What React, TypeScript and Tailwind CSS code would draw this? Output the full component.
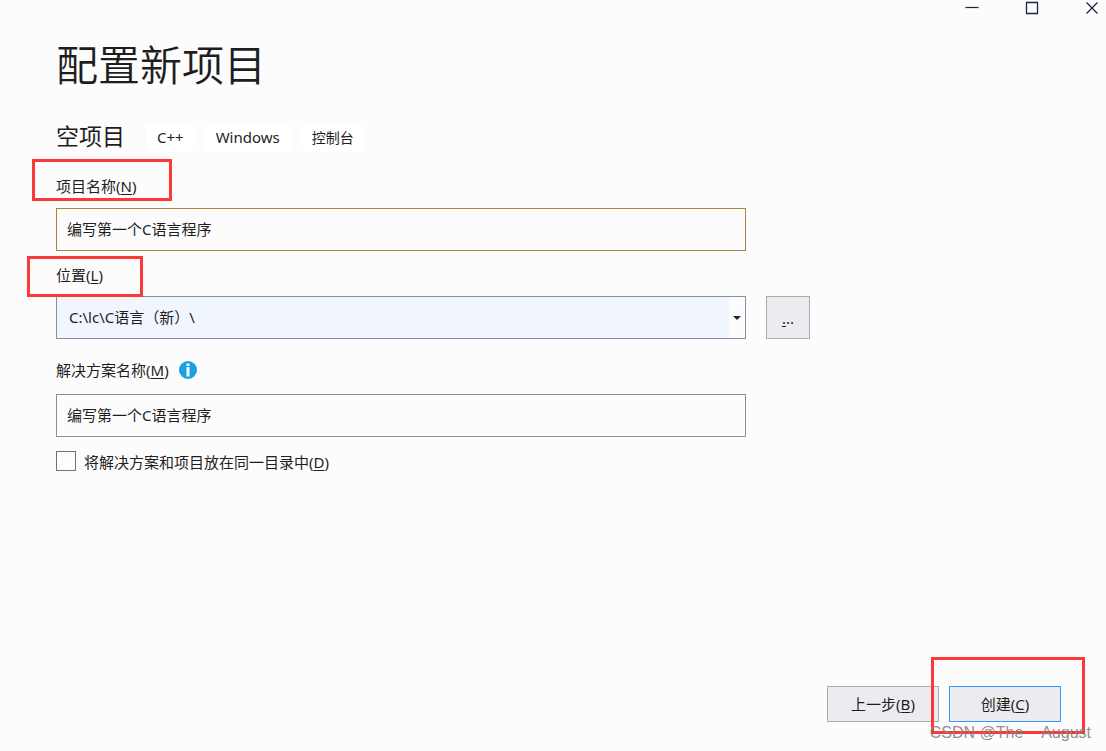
import type { ReactNode } from "react";

function Key({ children }: { children: ReactNode }) {
  return <span className="underline underline-offset-2">{children}</span>;
}

function Highlight({ className }: { className: string }) {
  return (
    <div
      aria-hidden="true"
      className={`pointer-events-none absolute z-10 border-[3px] border-[#fc3838] ${className}`}
    />
  );
}

function Tag({ children }: { children: ReactNode }) {
  return <li className="rounded-md bg-white px-[11px] pt-px leading-[27px]">{children}</li>;
}

function WindowControls() {
  return (
    <div className="flex h-4 justify-end gap-[46px] pr-[7px] text-[#17233f]">
      <button type="button" aria-label="最小化" className="h-4 w-[14px]">
        <svg width="14" height="16" viewBox="0 0 14 16" fill="none" stroke="currentColor">
          <path d="M.5 7.500h13" strokeWidth="1.2" />
        </svg>
      </button>
      <button type="button" aria-label="最大化" className="h-4 w-[14px]">
        <svg width="14" height="16" viewBox="0 0 14 16" fill="none" stroke="currentColor">
          <path d="M1.5 2.5h11v11h-11z" strokeWidth="1.3" />
        </svg>
      </button>
      <button type="button" aria-label="关闭" className="h-4 w-[14px]">
        <svg width="14" height="16" viewBox="0 0 14 16" fill="none" stroke="currentColor">
          <path d="M1.5 2.5l11 11M12.5 2.5l-11 11" strokeWidth="1.2" />
        </svg>
      </button>
    </div>
  );
}

export default function App() {
  return (
    <div className="flex min-h-screen flex-col bg-[#fcfcfc] font-['Noto_Sans','Noto_Sans_CJK_SC',sans-serif] text-[15px] leading-[22px] text-[#1e1e1e]">
      <WindowControls />
      <main className="flex flex-1 flex-col pr-[45px] pl-14">
        <h1 className="mt-[19px] text-[42px] leading-[60px] font-[350]">配置新项目</h1>
        <div className="mt-[25px] flex items-center gap-[21px]">
          <h2 className="text-[23px] leading-8">空项目</h2>
          <ul className="flex gap-[10px] pt-px">
            <Tag>C++</Tag>
            <Tag>Windows</Tag>
            <Tag>
              <span className="text-[14px]">控制台</span>
            </Tag>
          </ul>
        </div>

        <form className="mt-[23px] flex flex-1 flex-col" onSubmit={(e) => e.preventDefault()}>
          <div className="relative self-start">
            <label htmlFor="project">
              项目名称(<Key>N</Key>)
            </label>
            <Highlight className="-top-4 -left-6 h-[42px] w-[140px]" />
          </div>
          <input
            id="project"
            defaultValue="编写第一个C语言程序"
            className="mt-[11px] h-[43px] w-full max-w-[690px] border border-[#a8843c] bg-[#fcfcfc] px-[10px] pb-[2px] outline-none"
          />

          <div className="relative mt-[13px] self-start">
            <label htmlFor="location">
              位置(<Key>L</Key>)
            </label>
            <Highlight className="-top-2 -left-[29px] h-[41px] w-[116px]" />
          </div>
          <div className="mt-[10px] flex gap-5">
            <div className="relative w-full max-w-[690px]">
              <select
                id="location"
                className="block h-[43px] w-full appearance-none border border-[#8390a6] bg-[#f1f5fe] px-3 pb-[2px] outline-none"
              >
                <option>C:\lc\C语言（新）\</option>
              </select>
              <span className="pointer-events-none absolute inset-y-px right-px flex w-4 items-center justify-center bg-[#fcfcfc]">
                <svg width="8" height="4" viewBox="0 0 8 4" fill="#17233f">
                  <path d="M0 0h8L4 4z" />
                </svg>
              </span>
            </div>
            <button
              type="button"
              aria-label="浏览"
              className="h-[43px] w-11 shrink-0 border border-[#acacac] bg-[#ececf0]"
            >
              <Key>.</Key>..
            </button>
          </div>

          <div className="mt-5 flex items-center gap-[10px]">
            <label htmlFor="solution">
              解决方案名称(<Key>M</Key>)
            </label>
            <svg width="18" height="18" viewBox="0 0 18 18" role="img" aria-label="信息">
              <circle cx="9" cy="9" r="9" fill="#1ba1e2" />
              <path d="M7.5 2.500h3v2.500h-3zM7.500 6h3v9.500h-3z" fill="#fff" />
            </svg>
          </div>
          <input
            id="solution"
            defaultValue="编写第一个C语言程序"
            className="mt-[13px] h-[43px] w-full max-w-[690px] border border-[#8390a6] bg-[#fcfcfc] px-[10px] pb-[2px] outline-none"
          />

          <label className="mt-[14px] flex items-start gap-2 self-start">
            <input
              type="checkbox"
              className="size-5 appearance-none border border-[#717171] bg-[#fdfdfd] checked:bg-[#1ba1e2]"
            />
            <span>
              将解决方案和项目放在同一目录中(<Key>D</Key>)
            </span>
          </label>

          <div className="relative mt-auto mb-[29px] flex gap-[10px] self-end">
            <button type="button" className="h-9 w-28 border border-[#acacac] bg-[#ececf0]">
              上一步(<Key>B</Key>)
            </button>
            <button type="submit" className="h-9 w-28 border border-[#3399ff] bg-[#ececf0]">
              创建(<Key>C</Key>)
            </button>
            <Highlight className="-top-[29px] -right-6 h-[77px] w-[154px]" />
            <div className="pointer-events-none absolute top-9 -right-[30px] z-20 font-['Liberation_Sans',sans-serif] text-[16px] whitespace-pre text-[#828282]/90">
              CSDN @The{"\u00a0\u00a0\u00a0\u00a0"}August
            </div>
          </div>
        </form>
      </main>
    </div>
  );
}
